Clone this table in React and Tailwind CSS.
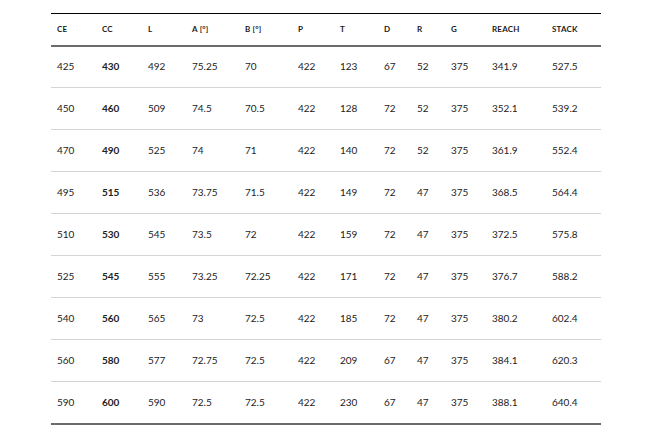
import React from 'react';

const columns = [
  { label: 'CE', width: 'w-[45px]' },
  { label: 'CC', width: 'w-[46px]' },
  { label: 'L', width: 'w-[44px]' },
  { label: 'A [°]', width: 'w-[53px]' },
  { label: 'B [°]', width: 'w-[53px]' },
  { label: 'P', width: 'w-[42px]' },
  { label: 'T', width: 'w-[44px]' },
  { label: 'D', width: 'w-[33px]' },
  { label: 'R', width: 'w-[34px]' },
  { label: 'G', width: 'w-[41px]' },
  { label: 'REACH', width: 'w-[60px]' },
  { label: 'STACK', width: 'w-[55px]' },
];

const rows = [
  ['425', '430', '492', '75.25', '70', '422', '123', '67', '52', '375', '341.9', '527.5'],
  ['450', '460', '509', '74.5', '70.5', '422', '128', '72', '52', '375', '352.1', '539.2'],
  ['470', '490', '525', '74', '71', '422', '140', '72', '52', '375', '361.9', '552.4'],
  ['495', '515', '536', '73.75', '71.5', '422', '149', '72', '47', '375', '368.5', '564.4'],
  ['510', '530', '545', '73.5', '72', '422', '159', '72', '47', '375', '372.5', '575.8'],
  ['525', '545', '555', '73.25', '72.25', '422', '171', '72', '47', '375', '376.7', '588.2'],
  ['540', '560', '565', '73', '72.5', '422', '185', '72', '47', '375', '380.2', '602.4'],
  ['560', '580', '577', '72.75', '72.5', '422', '209', '67', '47', '375', '384.1', '620.3'],
  ['590', '600', '590', '72.5', '72.5', '422', '230', '67', '47', '375', '388.1', '640.4'],
];

const App = () => {
  return (
    <div className="min-h-screen w-[650px] h-[433px] bg-white pt-[13px] pl-[51px] font-['Lato','Liberation_Sans',sans-serif] text-[#222]">
      <table className="table-fixed w-[550px] border-collapse">
        <thead>
          <tr className="border-t border-black border-b-2 border-b-[#6b6b6b] h-[32px]">
            {columns.map(col => (
              <th
                key={col.label}
                className={`${col.width} pl-[6px] text-left text-[8px] font-bold tracking-[0.2px] text-[#1a1a1a]`}
              >
                {col.label}
              </th>
            ))}
          </tr>
        </thead>
        <tbody>
          {rows.map((row, i) => (
            <tr
              key={row[0]}
              className={`h-[42px] ${i === rows.length - 1 ? 'border-b-2 border-b-[#6b6b6b]' : 'border-b border-b-[#d4d4d4]'}`}
            >
              {row.map((cell, j) => (
                <td
                  key={j}
                  className={`pl-[6px] text-[10px] ${j === 1 ? 'font-bold' : 'font-normal'}`}
                >
                  {cell}
                </td>
              ))}
            </tr>
          ))}
        </tbody>
      </table>
    </div>
  );
};

export default App;
